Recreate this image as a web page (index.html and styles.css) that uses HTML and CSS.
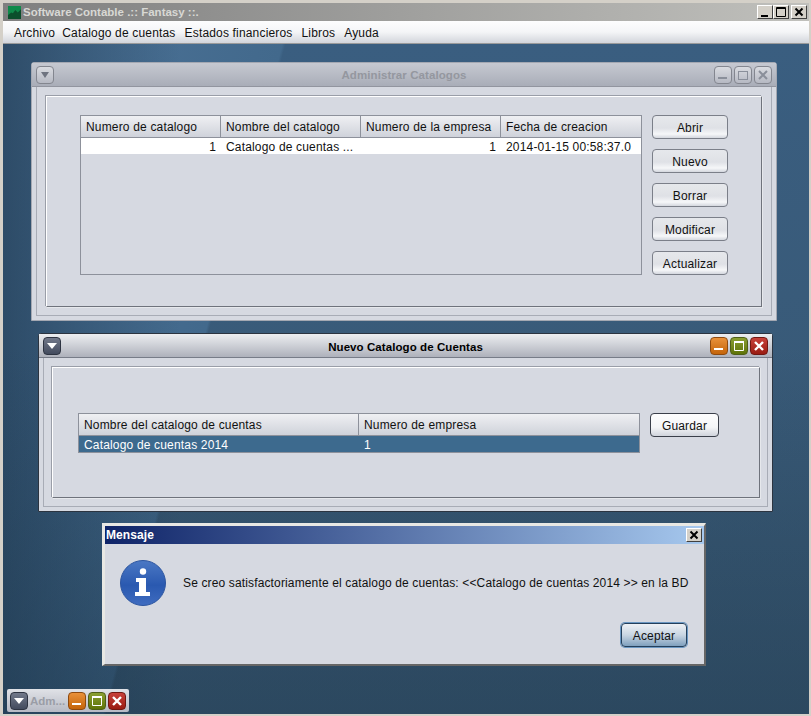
FILE: index.html
```html
<!DOCTYPE html>
<html lang="es">
  <head>
    <title>Software Contable .:: Fantasy ::.</title>
    <meta charset="utf-8" />
    <link rel="stylesheet" href="styles.css">
  </head>
  <body>
    <div id="app">
      <header class="app-title">
        <svg class="app-logo" width="13" height="13" viewBox="0 0 16 16">
          <rect width="16" height="16" fill="#0f8a4a" />
          <path d="M0 16V11L4 8L6 9L9 5L12 8L16 4V16Z" fill="#0b4f2c" />
        </svg>
        <span class="app-name">Software Contable .:: Fantasy ::.</span>
        <div class="app-controls">
          <span class="sys-btn"><svg width="12" height="12" viewBox="0 0 12 12"><rect x="2" y="9" width="7" height="2" fill="#000" /></svg></span>
          <span class="sys-btn"><svg width="12" height="12" viewBox="0 0 12 12"><path d="M1.5 1.5H10.5V10.5H1.5Z M1.5 2.5H10.5" fill="none" stroke="#000" /></svg></span>
          <span class="sys-btn"><svg width="12" height="12" viewBox="0 0 12 12"><path d="M2.5 2.5L9.5 9.5M9.5 2.5L2.5 9.5" stroke="#000" stroke-width="2" /></svg></span>
        </div>
      </header>
      <nav class="menu">
        <a>Archivo</a>
        <a>Catalogo de cuentas</a>
        <a>Estados financieros</a>
        <a>Libros</a>
        <a>Ayuda</a>
      </nav>
      <main class="desktop">
        <section class="frame frame-idle win-admin">
          <div class="frame-title">
            <span class="ctl ctl-idle"><svg width="10" height="6" viewBox="0 0 10 6"><path d="M1 0H9L5 6Z" fill="#6f7480" /></svg></span>
            <h2>Administrar Catalogos</h2>
            <div class="ctl-group">
              <span class="ctl ctl-idle"><svg width="12" height="12" viewBox="0 0 12 12"><rect x="1" y="8" width="9" height="2" fill="#8a8f9a" /></svg></span>
              <span class="ctl ctl-idle"><svg width="12" height="12" viewBox="0 0 12 12"><rect x="1.5" y="2.5" width="9" height="8" fill="none" stroke="#8a8f9a" /></svg></span>
              <span class="ctl ctl-idle"><svg width="12" height="12" viewBox="0 0 12 12"><path d="M2 2L10 10M10 2L2 10" stroke="#8a8f9a" stroke-width="2" /></svg></span>
            </div>
          </div>
          <div class="frame-body">
            <div class="panel panel-admin">
              <div class="table table-admin">
                <div class="row row-head">
                  <span>Numero de catalogo</span>
                  <span>Nombre del catalogo</span>
                  <span>Numero de la empresa</span>
                  <span>Fecha de creacion</span>
                </div>
                <div class="row row-data">
                  <span class="num">1</span>
                  <span>Catalogo de cuentas ...</span>
                  <span class="num">1</span>
                  <span>2014-01-15 00:58:37.0</span>
                </div>
              </div>
              <div class="btn-column">
                <button>Abrir</button>
                <button>Nuevo</button>
                <button>Borrar</button>
                <button>Modificar</button>
                <button>Actualizar</button>
              </div>
            </div>
          </div>
        </section>

        <section class="frame win-nuevo">
          <div class="frame-title">
            <span class="ctl ctl-menu"><svg width="10" height="6" viewBox="0 0 10 6"><path d="M0 0H10L5 6Z" fill="#fff" /></svg></span>
            <h2>Nuevo Catalogo de Cuentas</h2>
            <div class="ctl-group">
              <span class="ctl ctl-min"><svg width="12" height="12" viewBox="0 0 12 12"><rect x="1" y="8" width="9" height="2" fill="#fff" /></svg></span>
              <span class="ctl ctl-max"><svg width="12" height="12" viewBox="0 0 12 12"><path d="M1.5 1.5H10.5V10.5H1.5Z" fill="none" stroke="#fff" /><path d="M1 2H11" stroke="#fff" stroke-width="2" /></svg></span>
              <span class="ctl ctl-close"><svg width="12" height="12" viewBox="0 0 12 12"><path d="M2 2L10 10M10 2L2 10" stroke="#fff" stroke-width="2.4" /></svg></span>
            </div>
          </div>
          <div class="frame-body">
            <div class="panel panel-nuevo">
              <div class="table table-nuevo">
                <div class="row row-head">
                  <span>Nombre del catalogo de cuentas</span>
                  <span>Numero de empresa</span>
                </div>
                <div class="row row-selected">
                  <span>Catalogo de cuentas 2014</span>
                  <span>1</span>
                </div>
              </div>
              <button class="btn-save">Guardar</button>
            </div>
          </div>
        </section>

        <section class="dialog">
          <div class="dialog-title">
            <span>Mensaje</span>
            <span class="sys-btn dialog-x"><svg width="12" height="12" viewBox="0 0 12 12"><path d="M2.5 2.5L9.5 9.5M9.5 2.5L2.5 9.5" stroke="#000" stroke-width="2" /></svg></span>
          </div>
          <div class="dialog-body">
            <svg class="info-icon" width="48" height="48" viewBox="0 0 48 48">
              <defs>
                <linearGradient id="infoFill" x1="0" y1="0" x2="0" y2="1">
                  <stop offset="0" stop-color="#4b78c4" />
                  <stop offset="0.55" stop-color="#2a59b0" />
                  <stop offset="1" stop-color="#3f6cc0" />
                </linearGradient>
              </defs>
              <circle cx="24" cy="24" r="22.5" fill="url(#infoFill)" stroke="#2c55a0" />
              <circle cx="24" cy="12.5" r="3.2" fill="#fff" />
              <path d="M17 19H27V33H31V37H16V33H20V23H17Z" fill="#fff" />
            </svg>
            <p>Se creo satisfactoriamente el catalogo de cuentas: &lt;&lt;Catalogo de cuentas 2014 &gt;&gt; en la BD</p>
          </div>
          <div class="dialog-actions">
            <button class="btn-default">Aceptar</button>
          </div>
        </section>

        <section class="mini">
          <span class="ctl ctl-menu"><svg width="10" height="6" viewBox="0 0 10 6"><path d="M0 0H10L5 6Z" fill="#fff" /></svg></span>
          <span class="mini-name">Adm...</span>
          <span class="ctl ctl-min"><svg width="12" height="12" viewBox="0 0 12 12"><rect x="1" y="8" width="9" height="2" fill="#fff" /></svg></span>
          <span class="ctl ctl-max"><svg width="12" height="12" viewBox="0 0 12 12"><path d="M1.5 1.5H10.5V10.5H1.5Z" fill="none" stroke="#fff" /><path d="M1 2H11" stroke="#fff" stroke-width="2" /></svg></span>
          <span class="ctl ctl-close"><svg width="12" height="12" viewBox="0 0 12 12"><path d="M2 2L10 10M10 2L2 10" stroke="#fff" stroke-width="2.4" /></svg></span>
        </section>
      </main>
    </div>
  </body>
</html>
```

FILE: styles.css
```css
html,
body {
  margin: 0;
  height: 100%;
  overflow: hidden;
  font-family: "Liberation Sans", Arial, sans-serif;
  font-size: 12px;
  letter-spacing: 0.17px;
  color: #111;
}

#app {
  width: 811px;
  height: 716px;
  box-sizing: border-box;
  display: flex;
  flex-direction: column;
  background: #d4d0c8;
  border: solid #d4d0c8;
  border-width: 3px 2px 2px 3px;
}

.app-title {
  height: 18px;
  display: flex;
  align-items: center;
  padding-left: 5px;
  background: linear-gradient(to right, #7f7f7f, #c0c0bc);
}

.app-logo {
  margin-right: 2px;
}

.app-name {
  font-size: 11.5px;
  font-weight: bold;
  letter-spacing: 0;
  color: #d8d8d4;
}

.app-controls {
  margin-left: auto;
  margin-right: 2px;
  display: flex;
}

.sys-btn {
  width: 16px;
  height: 14px;
  display: flex;
  align-items: center;
  justify-content: center;
  box-sizing: border-box;
  background: #d4d0c8;
  border: 1px solid;
  border-color: #fff #404040 #404040 #fff;
}

.app-controls .sys-btn:nth-child(2) {
  margin-right: 2px;
}

.menu {
  height: 23px;
  box-sizing: border-box;
  display: flex;
  align-items: center;
  gap: 9px;
  padding: 2px 0 0 11px;
  background: linear-gradient(#fdfdfe, #f4f5f7 50%, #d2d5db);
  border-bottom: 1px solid #9a9a9a;
}

.menu a:first-child {
  margin-right: -2px;
}

.desktop {
  flex: 1;
  position: relative;
  background:
    linear-gradient(to bottom, transparent 45%, rgba(30, 55, 75, 0.45) 100%),
    linear-gradient(to right, rgba(25, 50, 72, 0.6) 0, transparent 22%),
    linear-gradient(105deg, #4e7499 0, #42698c 270px, transparent 273px),
    linear-gradient(#3a5e80, #375670);
}

.frame {
  position: absolute;
  box-sizing: border-box;
  display: flex;
  flex-direction: column;
  background: #d6d9e1;
  border: 1px solid #2b3440;
  border-radius: 3px 3px 0 0;
}

.win-admin {
  left: 28px;
  top: 18px;
  width: 746px;
  height: 259px;
}

.win-nuevo {
  left: 35px;
  top: 289px;
  width: 735px;
  height: 179px;
}

.frame-idle {
  border-color: #a4a8b2;
}

.frame-title {
  height: 23px;
  flex: none;
  position: relative;
  display: flex;
  align-items: center;
  padding: 0 4px;
  background: linear-gradient(#eceef1, #aeb1bb);
  border-bottom: 1px solid #777c88;
}

.frame-title h2 {
  position: absolute;
  left: 0;
  right: 0;
  margin: 2px 0 0;
  text-align: center;
  font-size: 11.5px;
  letter-spacing: 0.08px;
  color: #000;
}

.frame-idle .frame-title h2 {
  margin-top: 1px;
  color: #94979f;
}

.frame-idle .frame-title {
  background: linear-gradient(#c6c9d1, #a9adb8);
  border-bottom-color: #92959f;
}

.ctl-group {
  margin-left: auto;
  display: flex;
  gap: 2px;
  position: relative;
}

.ctl {
  width: 18px;
  height: 18px;
  flex: none;
  box-sizing: border-box;
  display: flex;
  align-items: center;
  justify-content: center;
  border-radius: 4px;
  border: 1px solid #555;
  position: relative;
}

.ctl-idle {
  background: linear-gradient(#d9dbe0, #b6b9c3);
  border-color: #83868f;
}

.ctl-menu {
  background: linear-gradient(#72798a, #434b5e);
  border-color: #2e3442;
}

.ctl-min {
  background: linear-gradient(#e9913a, #c4640a);
  border-color: #8e4a10;
}

.ctl-max {
  background: linear-gradient(#8ba032, #5f7308);
  border-color: #4f5f18;
}

.ctl-close {
  background: linear-gradient(#c8413a, #9a1c12);
  border-color: #711712;
}

.frame-body {
  flex: 1;
  padding: 9px 7px 8px 8px;
  border: 1px solid #a8acb6;
  border-top: 0;
  margin: 0 4px 4px;
  display: flex;
}

.win-admin .frame-body {
  padding: 9px 9px 8px 9px;
}

.panel {
  flex: 1;
  box-sizing: border-box;
  display: flex;
  align-items: flex-start;
  border: 1px solid;
  border-color: #fff #6f737c #6f737c #fff;
  box-shadow: -1px -1px 0 #9a9ea8, 1px 1px 0 #e6e8ec;
}

.panel-admin {
  padding: 18px 33px 0 33px;
  gap: 10px;
}

.panel-nuevo {
  padding: 45px 40px 0 25px;
  gap: 10px;
}

.table {
  box-sizing: border-box;
  border: 1px solid #8d919b;
  background: #d6d9e1;
}

.table-admin {
  width: 562px;
  height: 160px;
}

.table-nuevo {
  width: 562px;
  height: 40px;
}

.row {
  display: grid;
  align-items: center;
  height: 16px;
}

.table-admin .row {
  grid-template-columns: 140px 140px 140px 1fr;
}

.table-nuevo .row {
  grid-template-columns: 280px 1fr;
}

.row span {
  padding: 1px 5px 0;
  white-space: nowrap;
  overflow: hidden;
}

.row-head {
  height: 22px;
  background: linear-gradient(#eff0f3, #cfd2da);
  border-bottom: 1px solid #8d919b;
  box-sizing: border-box;
}

.row-head span {
  height: 100%;
  line-height: 21px;
  box-sizing: border-box;
  border-right: 1px solid #8d919b;
}

.row-head span:last-child {
  border-right: 0;
}

.row-data {
  background: #fff;
}

.row-selected {
  background: #3d6a8e;
  color: #fff;
}

.row .num {
  text-align: right;
}

.btn-column {
  display: flex;
  flex-direction: column;
  gap: 10px;
}

button {
  width: 76px;
  height: 24px;
  padding: 2px 0 0;
  font: inherit;
  letter-spacing: inherit;
  color: #111;
  background: linear-gradient(#e6e8ec, #dfe1e6 55%, #f6f7f9 82%, #d4d7de);
  border: 1px solid #7b7f89;
  border-radius: 4px;
}

.btn-save {
  width: 69px;
  background: linear-gradient(#fdfdfe, #f4f5f7 60%, #d0d4dc);
  border-color: #3a3f4a;
}

.dialog {
  position: absolute;
  left: 99px;
  top: 479px;
  width: 604px;
  height: 143px;
  box-sizing: border-box;
  display: flex;
  flex-direction: column;
  background: #d6d9e1;
  border: solid;
  border-width: 3px 2px 2px 3px;
  border-color: #e8e8e4 #666 #666 #e8e8e4;
}

.dialog-title {
  height: 18px;
  flex: none;
  display: flex;
  align-items: center;
  justify-content: space-between;
  padding-left: 1px;
  font-size: 12px;
  font-weight: bold;
  letter-spacing: 0.1px;
  color: #fff;
  background: linear-gradient(to right, #0f2468, #a6c8ee);
}

.dialog-x {
  margin-right: 2px;
}

.dialog-body {
  display: flex;
  align-items: center;
  gap: 16px;
  padding: 15px 0 0 14px;
}

.dialog-body p {
  margin: 0;
  letter-spacing: 0.14px;
}

.dialog-actions {
  margin-top: auto;
  padding: 0 17px 17px 0;
  display: flex;
  justify-content: flex-end;
}

.btn-default {
  width: 66px;
  background: linear-gradient(#eef1f5, #c8d5e2 50%, #7fa0be);
  border-color: #24405c;
  box-shadow: 0 0 0 1px #6b97c2;
}

.mini {
  position: absolute;
  left: 4px;
  top: 645px;
  width: 122px;
  height: 23px;
  box-sizing: border-box;
  display: flex;
  align-items: center;
  padding: 0 3px;
  gap: 2px;
  background: linear-gradient(#e0e2e7, #b7bac4);
  border-radius: 2px;
}

.mini-name {
  flex: 1;
  font-size: 11.5px;
  font-weight: bold;
  letter-spacing: 0;
  white-space: nowrap;
  color: #9a9da6;
}
```
